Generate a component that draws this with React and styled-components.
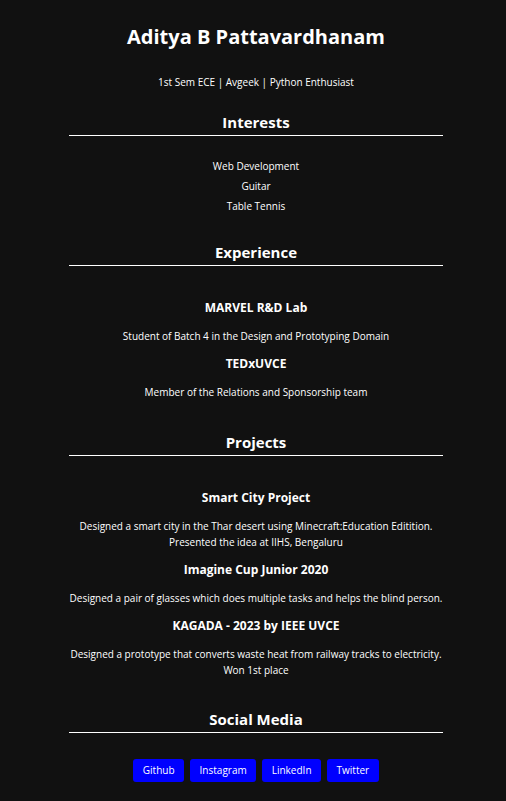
import React from 'react';
import styled, { createGlobalStyle } from 'styled-components';

const GlobalStyle = createGlobalStyle`
  body {
    margin: 0;
    background-color: #111111;
    color: #ffffff;
    font-family: "Open Sans", "Liberation Sans", sans-serif;
  }
`;

const Page = styled.div`
  width: 374px;
  margin-left: 69px;
  padding-top: 23px;
  padding-bottom: 20px;
  text-align: center;
`;

const Name = styled.h1`
  margin: 0;
  font-size: 20px;
  line-height: 28px;
  font-weight: 700;
`;

const Tagline = styled.p`
  margin: 24px 0 0;
  font-size: 10px;
  line-height: 14px;
`;

const Heading = styled.h2`
  margin: ${(p) => p.$gap}px 0 0;
  padding-bottom: 3px;
  font-size: 15px;
  line-height: 20px;
  font-weight: 700;
  border-bottom: 1px solid #ffffff;
`;

const List = styled.ul`
  list-style: none;
  margin: 20px 0 0;
  padding: 0;
`;

const ListItem = styled.li`
  font-size: 10px;
  line-height: 20px;
`;

const Entries = styled.div`
  display: flex;
  flex-direction: column;
  gap: 12px;
  margin-top: 34px;
`;

const EntryTitle = styled.h3`
  margin: 0;
  font-size: 12px;
  line-height: 16px;
  font-weight: 700;
`;

const EntryText = styled.p`
  margin: 0;
  font-size: 10px;
  line-height: 16px;
`;

const Links = styled.div`
  display: flex;
  justify-content: center;
  gap: 6px;
  margin-top: 26px;
`;

const LinkButton = styled.a`
  display: inline-block;
  padding: 0 9.5px;
  height: 23px;
  line-height: 23px;
  font-size: 10px;
  color: #ffffff;
  background-color: #0000ff;
  border-radius: 3px;
  text-decoration: none;
`;

const interests = ['Web Development', 'Guitar', 'Table Tennis'];

const experience = [
  { title: 'MARVEL R&D Lab', text: ['Student of Batch 4 in the Design and Prototyping Domain'] },
  { title: 'TEDxUVCE', text: ['Member of the Relations and Sponsorship team'] },
];

const projects = [
  {
    title: 'Smart City Project',
    text: ['Designed a smart city in the Thar desert using Minecraft:Education Editition.', 'Presented the idea at IIHS, Bengaluru'],
  },
  { title: 'Imagine Cup Junior 2020', text: ['Designed a pair of glasses which does multiple tasks and helps the blind person.'] },
  {
    title: 'KAGADA - 2023 by IEEE UVCE',
    text: ['Designed a prototype that converts waste heat from railway tracks to electricity.', 'Won 1st place'],
  },
];

const socials = ['Github', 'Instagram', 'LinkedIn', 'Twitter'];

function EntryList({ items }) {
  return (
    <Entries>
      {items.map((item) => (
        <React.Fragment key={item.title}>
          <EntryTitle>{item.title}</EntryTitle>
          <EntryText>
            {item.text.map((line, i) => (
              <React.Fragment key={i}>
                {i > 0 && <br />}
                {line}
              </React.Fragment>
            ))}
          </EntryText>
        </React.Fragment>
      ))}
    </Entries>
  );
}

export default function App() {
  return (
    <>
      <GlobalStyle />
      <Page>
        <Name>Aditya B Pattavardhanam</Name>
        <Tagline>1st Sem ECE | Avgeek | Python Enthusiast</Tagline>

        <Heading $gap={23}>Interests</Heading>
        <List>
          {interests.map((i) => (
            <ListItem key={i}>{i}</ListItem>
          ))}
        </List>

        <Heading $gap={26}>Experience</Heading>
        <EntryList items={experience} />

        <Heading $gap={32}>Projects</Heading>
        <EntryList items={projects} />

        <Heading $gap={31}>Social Media</Heading>
        <Links>
          {socials.map((s) => (
            <LinkButton key={s} href="#">{s}</LinkButton>
          ))}
        </Links>
      </Page>
    </>
  );
}
